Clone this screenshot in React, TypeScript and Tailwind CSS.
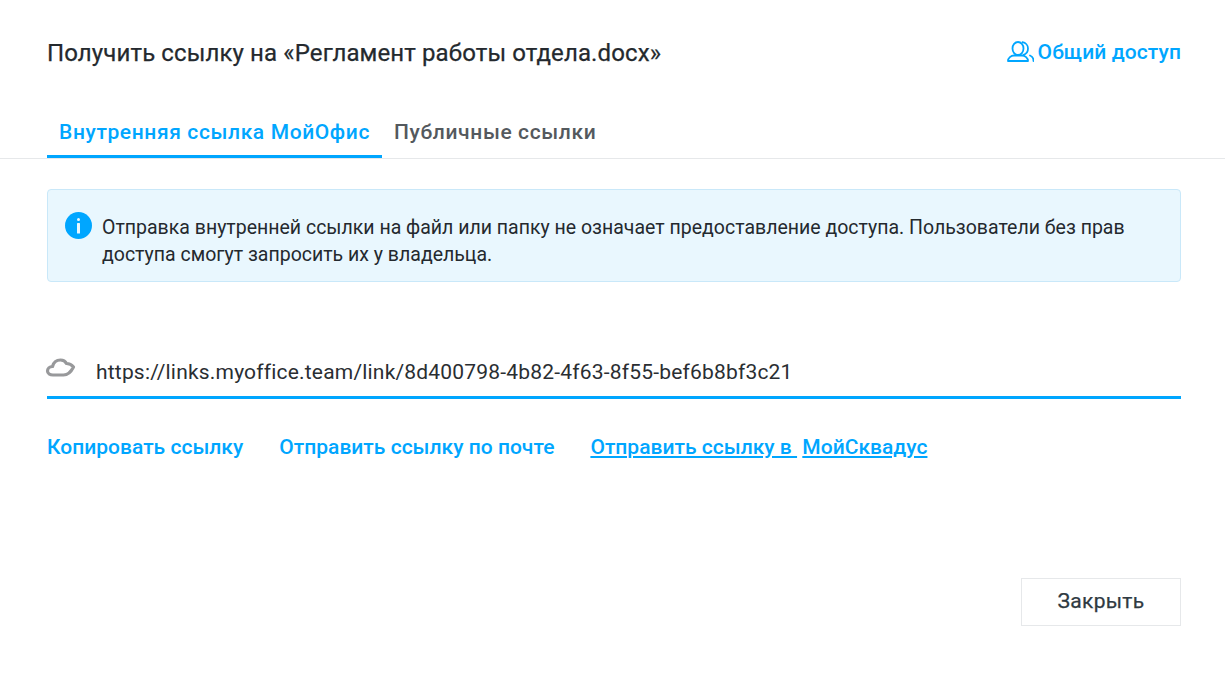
export default function App() {
  return (
    <div className="w-[1225px] h-[674px] bg-white overflow-hidden font-['Roboto',sans-serif] text-[#24292e]">
      <div className="flex items-center justify-between pl-[47px] pr-[44px] h-[105px] pt-[1px]">
        <h1 className="text-[24px] leading-[28px] font-normal tracking-[0.12px] [-webkit-text-stroke:0.25px_#24292e]">Получить ссылку на «Регламент работы отдела.docx»</h1>
        <a className="flex items-center gap-[4px] text-[#00a6ff] text-[21px] font-medium tracking-[0.1px] leading-[28px] mt-[-2px]">
          <svg width="27" height="22" viewBox="0 0 27 22" fill="none" stroke="#00a6ff" strokeWidth="1.800" strokeLinecap="round" strokeLinejoin="round">
            <ellipse cx="11" cy="7.500" rx="5.500" ry="6.500" />
            <path d="M15.500 1.200c3 .5 5.500 3 5.500 6.300s-2 5.500-4.500 6.300" />
            <path d="M1 20c0-3 3-5.500 6-5.500h8c3 0 6 2.500 6 5.500H1z" />
            <path d="M23 14.500c2.500 1 3.500 3 3.500 5.500" />
          </svg>
          Общий доступ
        </a>
      </div>
      <div className="flex pl-[47px] h-[54px] border-b border-[#e6e8ea]">
        <div className="h-[53px] px-[12px] pt-[14px] border-b-[3px] border-[#00a6ff] text-[#00a6ff] text-[21px] leading-[26px] font-medium tracking-[0.62px]">Внутренняя ссылка МойОфис</div>
        <div className="px-[12px] pt-[14px] text-[#54595e] text-[21px] leading-[26px] font-medium tracking-[0.62px]">Публичные ссылки</div>
      </div>
      <div className="ml-[47px] mr-[44px] mt-[30px] h-[93px] rounded-[4px] border border-[#c9e8f9] bg-[#e9f7fe] flex pl-[17px] pt-[23px]">
        <svg className="shrink-0 mt-[-1px] ml-[-0.5px]" width="27" height="27" viewBox="0 0 27 27">
          <circle cx="13.500" cy="13.500" r="13.500" fill="#00a6ff" />
          <rect x="12" y="11" width="3" height="10.500" rx="0.500" fill="#e9f7fe" />
          <rect x="12" y="6" width="3" height="3" rx="1.500" fill="#e9f7fe" />
        </svg>
        <p className="ml-[10.500px] text-[19.500px] leading-[27.500px] mt-[0.5px] w-[1060px]">Отправка внутренней ссылки на файл или папку не означает предоставление доступа. Пользователи без прав доступа смогут запросить их у владельца.</p>
      </div>
      <div className="ml-[47px] mr-[44px] mt-[62px] h-[55px] border-b-[3px] border-[#00a6ff] flex items-center">
        <svg className="shrink-0 mt-[-7px] ml-[-2px]" width="31" height="24" viewBox="0 0 31 24" fill="none" stroke="#98999b" strokeWidth="3.200" strokeLinejoin="round">
          <path d="M8 20c-3 0-5.500-1.500-5.500-4 0-2.500 2-4.500 5-4.500 1-4 4-6.500 8-6.500 3 0 5 1.500 6 3.500 2.500 0 5 1 7 3.500-2 4-5 8-10 8H8z" />
        </svg>
        <span className="ml-[20px] text-[21px] leading-[28px] mt-[4px] tracking-[0.19px] text-[#2a2e32]">https://links.myoffice.team/link/8d400798-4b82-4f63-8f55-bef6b8bf3c21</span>
      </div>
      <div className="flex gap-[36px] pl-[47px] mt-[34px] text-[#00a6ff] text-[21px] leading-[28px] font-medium tracking-[0.02px]">
        <a>Копировать ссылку</a>
        <a>Отправить ссылку по почте</a>
        <a className="whitespace-pre"><span className="underline">Отправить ссылку в </span> <span className="underline">МойСквадус</span></a>
      </div>
      <div className="flex justify-end mr-[44px] mt-[117px]">
        <button className="w-[160px] h-[48px] border border-[#e6e8ea] text-[21px] font-normal text-[#2f3a42] tracking-[0.3px] [-webkit-text-stroke:0.25px_#2f3a42]">Закрыть</button>
      </div>
    </div>
  );
}
